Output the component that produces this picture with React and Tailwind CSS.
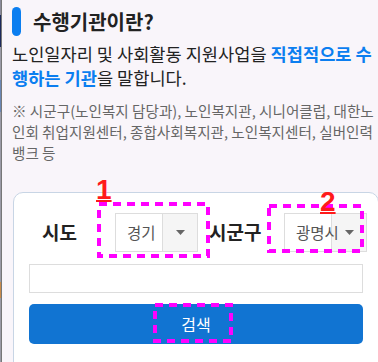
import React from 'react'

function DashBox({ className, w, h }) {
	return (
		<svg className={className} width={w} height={h} viewBox={`0 0 ${w} ${h}`}>
			<rect
				x="2"
				y="2"
				width={w - 4}
				height={h - 4}
				fill="none"
				stroke="#ff00ff"
				strokeWidth="4"
				strokeDasharray="8 6"
			/>
		</svg>
	)
}

function Select({ value }) {
	return (
		<div className="flex h-[39px] border border-[#dddddd] bg-white">
			<div className="relative z-10 w-[46px] pl-[11px] flex items-center text-[15.5px] text-[#555] whitespace-nowrap">
				{value}
			</div>
			<div className="w-[35px] flex items-center justify-center bg-[#f5f5f5] border-l border-[#dddddd]">
				<svg width="9" height="5" viewBox="0 0 9 5">
					<path d="M0 0h9L4.5 5z" fill="#666" />
				</svg>
			</div>
		</div>
	)
}

function App() {
	return (
		<div className="w-[378px] h-[362px] overflow-hidden flex bg-[#f9f5fa] font-['Noto_Sans_CJK_KR','Noto_Sans',sans-serif]">
			{/* edge of the page behind */}
			<div className="w-[1px] flex flex-col shrink-0">
				<div className="h-[15px] bg-[#8a8a9a]" />
				<div className="h-[32px] bg-[#1d2a5c]" />
				<div className="h-[33px] bg-[#9a9aa6]" />
				<div className="h-[32px] bg-[#6a86b4]" />
				<div className="h-[170px] bg-[#9a9aa6]" />
				<div className="h-[16px] bg-[#c98a4a]" />
				<div className="flex-1 bg-[#9a9aa6]" />
			</div>
			<div className="w-[1px] bg-[#777] shrink-0" />

			<div className="flex-1 pl-[10px] min-w-0">
				<div className="mt-[7px] flex items-center">
					<div className="w-[9px] h-[29px] rounded-full bg-[#0b7ef0]" />
					<h2 className="ml-[12px] text-[20px] font-bold text-[#222] leading-[29px]">수행기관이란?</h2>
				</div>

				<p className="mt-[6px] w-[368px] text-[17.6px] leading-[24px] text-[#222]">
					노인일자리 및 사회활동 지원사업을{' '}
					<span className="font-bold text-[#0b7ef0]">직접적으로 수행하는 기관</span>을 말합니다.
				</p>

				<p className="mt-[10px] w-[366px] text-[14.6px] leading-[21px] text-[#666]">
					※ 시군구(노인복지 담당과), 노인복지관, 시니어클럽, 대한노인회 취업지원센터, 종합사회복지관, 노인복지센터,
					실버인력뱅크 등
				</p>

				<div className="relative mt-[29px] ml-[1px] w-[366px] h-[200px] rounded-[10px] border-[1.5px] border-[#c8d5e5] bg-white pl-[15px]">
					<div className="mt-[20px] flex items-center h-[39px]">
						<span className="ml-[13px] w-[34px] text-[19px] font-bold text-[#222] whitespace-nowrap">시도</span>
						<div className="ml-[39px]">
							<Select value="경기" />
						</div>
						<span className="ml-[11px] w-[50px] text-[19px] font-bold text-[#222] whitespace-nowrap">시군구</span>
						<div className="ml-[25px]">
							<Select value="광명시" />
						</div>
					</div>

					<div className="mt-[12px] w-[334px] h-[29px] border border-[#dddddd]" />

					<button className="mt-[11px] w-[334px] h-[40px] rounded-[5px] bg-[#1174d2] text-white text-[16px]">
						검색
					</button>

					<DashBox className="absolute left-[83px] top-[9px]" w={113} h={56} />
					<DashBox className="absolute left-[253px] top-[11px]" w={97} h={49} />
					<DashBox className="absolute left-[139px] top-[110px]" w={80} h={40} />

					<span className="absolute left-[82px] top-[-19px] text-[28px] leading-[32px] font-bold text-[#ff1a1a] underline decoration-[2px] underline-offset-[1px] font-['Liberation_Sans',sans-serif]">
						1
					</span>
					<span className="absolute left-[306px] top-[-7px] text-[28px] leading-[32px] font-bold text-[#ff1a1a] underline decoration-[2px] underline-offset-[1px] font-['Liberation_Sans',sans-serif]">
						2
					</span>
				</div>
			</div>
		</div>
	)
}

export default App
